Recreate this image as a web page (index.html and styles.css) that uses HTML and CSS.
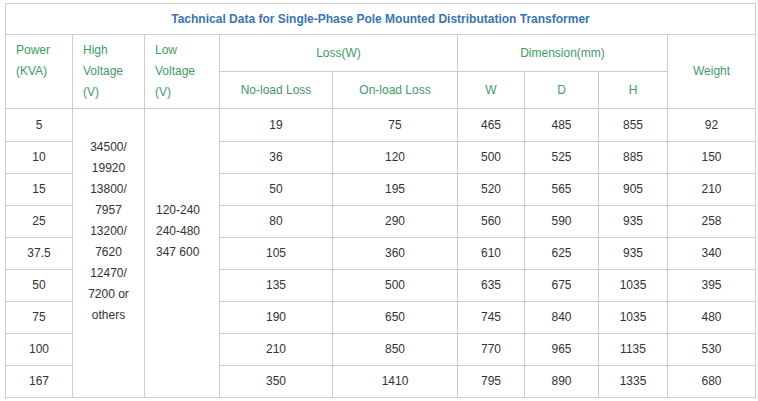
FILE: index.html
```html
<!DOCTYPE html>
<html>
<head>
<meta charset="utf-8">
<link rel="stylesheet" href="styles.css">
</head>
<body>
<div class="wrap">
<table class="spec">
  <colgroup>
    <col class="c1"><col class="c2"><col class="c3"><col class="c4"><col class="c5"><col class="c6"><col class="c7"><col class="c8"><col class="c9">
  </colgroup>
  <thead>
    <tr class="title-row"><th colspan="9" class="title">Tachnical Data for Single-Phase Pole Mounted Distributation Transformer</th></tr>
    <tr class="head-row">
      <th rowspan="2" class="hl">Power<br>(KVA)</th>
      <th rowspan="2" class="hl">High<br>Voltage<br>(V)</th>
      <th rowspan="2" class="hl">Low<br>Voltage<br>(V)</th>
      <th colspan="2" class="hc">Loss(W)</th>
      <th colspan="3" class="hc">Dimension(mm)</th>
      <th rowspan="2" class="hc">Weight</th>
    </tr>
    <tr class="head-row">
      <th class="hc sub">No-load Loss</th>
      <th class="hc sub">On-load Loss</th>
      <th class="hc sub">W</th>
      <th class="hc sub">D</th>
      <th class="hc sub">H</th>
    </tr>
  </thead>
  <tbody>
    <tr class="first"><td>5</td><td rowspan="9" class="hv">34500/<br>19920<br>13800/<br>7957<br>13200/<br>7620<br>12470/<br>7200 or<br>others</td><td rowspan="9" class="lv">120-240<br>240-480<br>347 600</td><td>19</td><td>75</td><td>465</td><td>485</td><td>855</td><td>92</td></tr>
    <tr><td>10</td><td>36</td><td>120</td><td>500</td><td>525</td><td>885</td><td>150</td></tr>
    <tr><td>15</td><td>50</td><td>195</td><td>520</td><td>565</td><td>905</td><td>210</td></tr>
    <tr><td>25</td><td>80</td><td>290</td><td>560</td><td>590</td><td>935</td><td>258</td></tr>
    <tr><td>37.5</td><td>105</td><td>360</td><td>610</td><td>625</td><td>935</td><td>340</td></tr>
    <tr><td>50</td><td>135</td><td>500</td><td>635</td><td>675</td><td>1035</td><td>395</td></tr>
    <tr><td>75</td><td>190</td><td>650</td><td>745</td><td>840</td><td>1035</td><td>480</td></tr>
    <tr><td>100</td><td>210</td><td>850</td><td>770</td><td>965</td><td>1135</td><td>530</td></tr>
    <tr><td>167</td><td>350</td><td>1410</td><td>795</td><td>890</td><td>1335</td><td>680</td></tr>
  </tbody>
</table>
</div>
</body>
</html>
```
FILE: styles.css
```css
html, body {
  margin: 0;
  padding: 0;
  background: #ffffff;
}
.wrap {
  padding: 3px 0 0 5px;
}
.spec {
  border-collapse: collapse;
  table-layout: fixed;
  width: 750px;
  font-family: "Liberation Sans", Arial, sans-serif;
  font-size: 12px;
  line-height: 21px;
  color: #333333;
}
.c1 { width: 67px; }
.c2 { width: 72px; }
.c3 { width: 75px; }
.c4 { width: 113px; }
.c5 { width: 125px; }
.c6 { width: 67px; }
.c7 { width: 74px; }
.c8 { width: 69px; }
.c9 { width: 88px; }
.spec th, .spec td {
  border: 1px solid #cccccc;
  padding: 0;
  font-weight: normal;
}
.title-row th {
  height: 30px;
}
.title {
  color: #3a74b0;
  font-weight: bold !important;
  text-align: center;
  vertical-align: middle;
}
.head-row th {
  height: 36px;
  color: #3f9a66;
}
.hl {
  text-align: left;
  vertical-align: top;
  padding: 5px 0 0 10px !important;
}
.hc {
  text-align: center;
  vertical-align: middle;
}
.spec td {
  height: 31px;
  text-align: center;
  vertical-align: middle;
}
.spec tr.first td {
  height: 32px;
}
.spec td.hv {
  vertical-align: middle;
  padding-bottom: 44px;
}
.spec td.lv {
  text-align: left;
  vertical-align: middle;
  padding: 0 0 44px 11px;
}
```
